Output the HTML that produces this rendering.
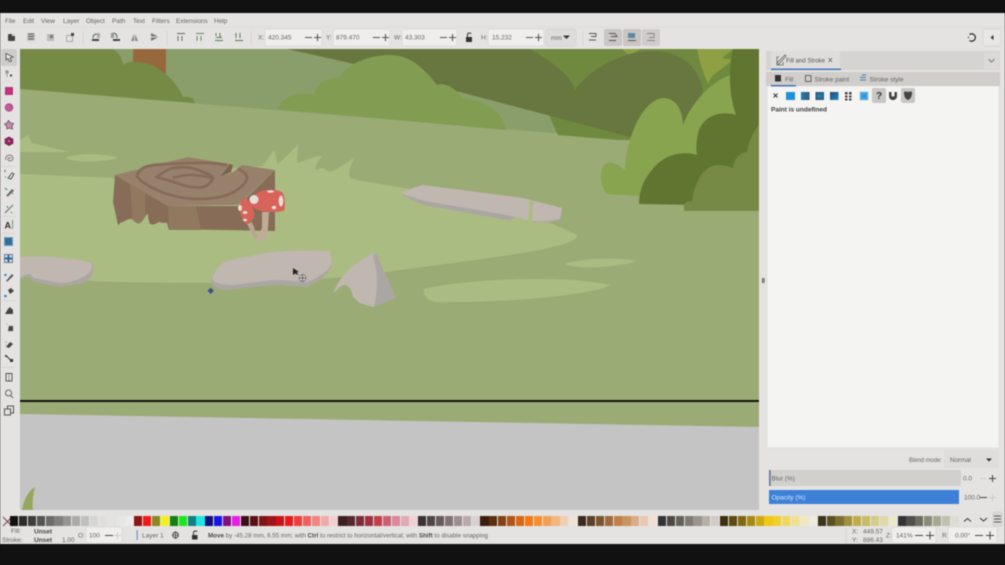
<!DOCTYPE html>
<html>
<head>
<meta charset="utf-8">
<style>
html,body{margin:0;padding:0;background:#111;width:1005px;height:565px;overflow:hidden}
#w{position:absolute;left:0;top:0;width:1005px;height:565px;filter:blur(.5px)}
svg{position:absolute;left:0;top:0}
text{font-family:"Liberation Sans",sans-serif;font-size:6.5px;fill:#666}
.b{font-weight:bold;fill:#4a4a4a}
.pal{position:absolute;left:10px;top:516px;height:10px;display:flex}
.pal i{display:block;width:8.2px;margin-right:.7px;height:10px;flex:none}
.d{fill:#444}
</style>
</head>
<body>
<div id="w">
<svg width="1005" height="565" viewBox="0 0 1005 565">
<rect width="1005" height="565" fill="#111"/>
<rect y="13" width="1005" height="531" fill="#e4e3e1"/>
<line x1="0" y1="27" x2="1005" y2="27" stroke="#dedcda"/>
<!-- CANVAS -->
<svg x="20" y="49" width="739" height="461" viewBox="20 49 739 461">
<rect x="20" y="49" width="739" height="461" fill="#9bab75"/>
<path d="M20 49H759V150L20 89Z" fill="#8a9e6b"/>
<path d="M520 49H740V140H560Z" fill="#6f8a3e"/>
<path d="M287 49H530C552 62 570 74 575 90C590 68 625 50 657 51C682 53 698 66 703 90L690 137H630L460 92L350 63Z" fill="#68763f"/>
<path d="M697 49H733L722 58L733 60L712 76L708 84C703 72 699 60 697 49Z" fill="#8fa044"/>
<path d="M622 49H640C636 52 632 54 628 54Z" fill="#8fa044"/>
<rect x="133" y="49" width="33" height="30" fill="#96683c"/>
<path d="M20 49H112C119 52 122 58 123 65C128 61 133 62 137 62C155 62 175 78 183 97C190 96 194 98 195 103L20 89Z" fill="#758a45"/>
<path d="M277 109C283 99 290 94 302 94C308 93 312 94 314 95C315 84 326 78 339 78C344 67 365 55 390 55C410 55 424 68 437 85C443 82 455 87 463 98C485 100 503 112 506 130Z" fill="#829c52"/>
<path d="M20 89L390 121L630 141L759 152V420L20 420Z" fill="#9bab75"/>
<path d="M607 194C600 186 599 172 604 165C610 159 620 166 625 170C625 145 640 100 663 98C677 98 683 112 683 125C690 105 710 82 730 75L759 60V196H640Z" fill="#88a44e"/>
<path d="M733 49C728 70 729 95 736 115C722 111 706 114 699 130C696 140 696 150 697 155C680 150 662 156 652 170C643 180 639 192 639 204L759 206V49Z" fill="#607530"/>
<path d="M684 211V205C687 200 691 202 692 201C695 180 705 165 718 165C725 165 731 167 733 168C734 158 741 152 747 152C749 142 752 133 759 125V211Z" fill="#768a45"/>
<path d="M20 174L115 178L262 166L355 180C420 190 530 208 578 236C570 248 520 254 400 270C360 276 340 278 300 280C250 283 160 284 90 281L20 262Z" fill="#abbc82"/>
<path d="M20 140L28 135L32 143L70 152L20 152Z" fill="#abbc82"/>
<path d="M65 158C75 153 105 153 118 158C105 162 75 163 65 158Z" fill="#abbc82"/>
<path d="M565 264C580 258 620 257 637 261C620 267 580 270 565 264Z" fill="#abbc82"/>
<path d="M424 289C460 280 560 274 610 285C590 296 500 303 435 302C425 300 423 293 424 289Z" fill="#abbc82"/>
<path d="M263 166C268 158 271 154 274 150C276 154 276 160 278 164C286 158 292 150 298 145C298 152 296 160 298 163C306 160 314 156 322 156C318 162 314 166 316 170L322 168L330 172C340 168 348 162 355 157C350 166 348 172 350 178L357 180L300 190Z" fill="#abbc82"/>
<!-- right rock -->
<path d="M402 195C408 190 415 187 423 185L523 198L562 208L560 220L547 223L507 220L423 205Z" fill="#aca6a3"/>
<path d="M402 194C408 189 415 187 423 185L523 198L562 208L560 219L547 221L530 221L507 215L425 201Z" fill="#bfb7b0"/>
<path d="M530 200L533 201L532 222L528 222Z" fill="#abbc82"/>
<path d="M508 222L515 217L527 220V225L508 225ZM532 222L545 222L552 226H532Z" fill="#abbc82"/>
<!-- left rock -->
<path d="M20 257C40 255 70 258 85 261C91 262 94 264 93 266L93 273C91 278 87 281 83 283L60 287L32 281L30 277C26 276 23 278 20 280Z" fill="#aca6a3"/>
<path d="M20 257C40 255 70 258 85 261C91 262 93 264 92 267L90 272C85 277 72 283 60 283L34 278L30 274C26 274 23 276 20 278Z" fill="#bfb7b0"/>
<!-- central rock -->
<path d="M211 280C214 272 218 266 223 263C230 259 240 258 247 257C260 254 268 252 273 252C290 250 315 250 330 251L332 263C331 268 328 273 323 277C317 282 312 285 307 287L277 285C260 286 240 289 223 290C217 289 212 286 211 280Z" fill="#aca6a3"/>
<path d="M212 279C214 272 218 266 223 263C230 259 240 258 247 257C260 254 268 252 273 252C290 250 315 250 330 251L332 262C331 266 328 270 325 272C318 277 313 280 307 282L277 280C260 281 245 284 233 285C222 285 214 283 212 279Z" fill="#bfb7b0"/>
<!-- tri rock -->
<path d="M333 293L337 285C345 270 360 260 373 253L376 253L396 298L373 307L360 303L353 297C352 290 349 286 345 285C340 285 337 291 333 293Z" fill="#bfb7b0"/>
<path d="M373 255L376 253L396 298L374 307C378 290 378 272 373 255Z" fill="#aca6a3"/>
<!-- stump -->
<path d="M115 175L168 206H238L275 170V231L167 229L118 225L113 202Z" fill="#876c58"/>
<path d="M130 184L145 192L146 227L133 226ZM168 206L196 206L201 230H169Z" fill="#91795f"/>
<path d="M115 175L188 157L230 164L220 177L233 172L242 165L275 170L238 205L168 206Z" fill="#98816c"/>
<path d="M227 165C210 162 200 163 188 163C170 164 150 164 143 168C139 171 137 174 137 177C143 183 150 187 157 190C170 196 185 199 200 199C215 199 228 196 237 190C243 186 247 182 247 177C246 173 243 171 238 169M157 177C163 172 168 169 173 168C185 166 195 168 203 172C209 174 213 176 213 178C210 184 207 186 203 187C195 189 185 186 177 183C170 181 163 179 157 177ZM173 178C180 176 185 175 190 175C198 175 205 176 213 178" fill="none" stroke="#866c58" stroke-width="2.800"/>
<path d="M220 177L230 164L233 165L231 172Z" fill="#7b634f"/>
<path d="M118 226L120 223C124 222 128 218 132 219C135 222 138 225 140 223C143 222 146 214 148 214C148 218 149 222 150 224C155 226 157 222 160 222C163 224 166 222 167 223L170 234H115Z" fill="#abbc82"/>
<!-- mushrooms -->
<path d="M247 224L252 222L258 238L254 238Z" fill="#b9a58f"/>
<path d="M262 212L269 212L268 228L266 241H256L262 228Z" fill="#c0ab97"/>
<path d="M243 199C247 195 251 204 254 212C256 218 250 223 246 224C240 217 237 205 243 199Z" fill="#d8635a"/>
<path d="M251 199C256 190 272 187 282 192C286 197 285 208 284 211C272 213 260 212 254 208C250 206 249 204 251 199Z" fill="#d8635a"/>
<ellipse cx="254" cy="199.500" rx="4.500" ry="4.500" fill="#e6dfd9"/>
<ellipse cx="281" cy="201" rx="2.300" ry="5.500" fill="#e6dfd9"/>
<ellipse cx="270.500" cy="191.500" rx="3.500" ry="1.300" fill="#e6dfd9"/>
<ellipse cx="274" cy="207.500" rx="2.300" ry="1.800" fill="#e6dfd9"/>
<ellipse cx="240" cy="208" rx="2" ry="3" fill="#e6dfd9"/>
<ellipse cx="245" cy="212.500" rx="2.500" ry="1.500" fill="#e6dfd9"/>
<ellipse cx="245" cy="220" rx="2" ry="1.300" fill="#e6dfd9"/>
<!-- cursor -->
<rect x="208.500" y="288.500" width="4.500" height="4.500" transform="rotate(45 210.700 290.700)" fill="#3c4f8e"/>
<path d="M293 268L293 275L295 273.500L298 275L297 272H299Z" fill="#222"/>
<circle cx="302.500" cy="278" r="3.400" fill="#d9d6d2" stroke="#666" stroke-width=".7"/>
<path d="M299.500 278H305.500M302.500 275V281" stroke="#444" stroke-width=".8"/>
<!-- line and lower -->
<path d="M20 414L759 427V510H20Z" fill="#c4c4c4"/>
<rect x="20" y="400" width="739" height="2" fill="#111"/>
<path d="M22 510C24 500 28 491 35 487C33 495 32 503 33 510Z" fill="#93a85d"/>
</svg>

<rect x="759" y="49" width="8" height="467" fill="#e4e3e1"/>
<rect x="0" y="510" width="760" height="6" fill="#e4e3e1"/>
<rect x="762" y="278" width="1" height="5" fill="#555"/><rect x="763.500" y="278" width="1" height="5" fill="#555"/>

<!-- MENU -->
<text x="5" y="23">File</text><text x="23" y="23">Edit</text><text x="41" y="23">View</text><text x="63" y="23">Layer</text><text x="86" y="23">Object</text><text x="112" y="23">Path</text><text x="133" y="23">Text</text><text x="152" y="23">Filters</text><text x="176" y="23">Extensions</text><text x="214" y="23">Help</text>

<!-- TOP TOOLBAR ICONS -->
<rect x="8" y="34" width="7" height="7" class="d" rx="1"/><rect x="12" y="33" width="3" height="3" fill="#d8d8d8"/>
<rect x="27" y="33" width="8" height="8" fill="#999" opacity=".35"/><path d="M28 34h6M28 36.500h6M28 39h6" stroke="#666" stroke-width="1.200"/>
<rect x="47" y="34" width="7" height="7" fill="#bbb"/><rect x="50" y="35" width="3" height="3" fill="#777"/>
<rect x="66.500" y="35.500" width="6" height="6" fill="none" stroke="#aaa"/><rect x="71" y="33" width="3" height="3" fill="#444"/>
<rect x="92" y="39" width="7" height="2" fill="#444"/><path d="M93 38c0-3 2-4 4-4" fill="none" stroke="#3d6a42" stroke-width="1"/><rect x="97" y="33" width="3" height="5" fill="#aaa"/>
<path d="M113 33c3 0 4 2 4 5" fill="none" stroke="#3d6a42" stroke-width="1"/><rect x="111" y="33" width="3" height="5" fill="#999"/><rect x="113" y="39" width="7" height="2" fill="#444"/>
<path d="M131 41l3-7v7zM135 34l3 7h-3z" fill="#888"/>
<path d="M151 33l7 3.500h-7zM151 37.500h7l-7 3.500z" fill="#777"/>
<g stroke="#666" stroke-width="1" fill="none">
<path d="M177 33.500h8M178 36v5M182 36v5"/><path d="M196 33.500h8M197 36v5M201 36v5" stroke="#6b8a6b"/><path d="M215 40.500h8M216 33v3M220 33v5M216 37.500h6" stroke="#5a7a5a"/><path d="M235 40.500h8M236 33v5M240 33v5"  stroke="#5a7a5a"/>
</g>
<line x1="83" y1="31" x2="83" y2="45" stroke="#d6d4d2"/><line x1="167" y1="31" x2="167" y2="45" stroke="#d6d4d2"/><line x1="251" y1="31" x2="251" y2="45" stroke="#d6d4d2"/>

<!-- FIELDS -->
<g fill="#efeeec" stroke="#d8d6d4" stroke-width=".7">
<rect x="265" y="29" width="57" height="17" rx="2"/><rect x="333" y="29" width="57" height="17" rx="2"/><rect x="402" y="29" width="55" height="17" rx="2"/><rect x="488" y="29" width="56" height="17" rx="2"/>
</g>
<rect x="546" y="29" width="30" height="17" rx="2" fill="#dfddda" stroke="#d2d0ce" stroke-width=".7"/>
<text x="258" y="39.500">X:</text><text x="268" y="39.500">420.345</text>
<text x="326" y="39.500">Y:</text><text x="336" y="39.500">879.470</text>
<text x="394" y="39.500">W:</text><text x="405" y="39.500">43.303</text>
<text x="481" y="39.500">H:</text><text x="492" y="39.500">15.232</text>
<text x="551" y="40">mm</text>
<path d="M563 35.500h7l-3.500 3.500z" fill="#333"/>
<g stroke="#555" stroke-width="1.100">
<path d="M305 37.500h7M314 37.500h7M317.500 34v7M373 37.500h7M382 37.500h7M385.500 34v7M440 37.500h7M449 37.500h7M452.500 34v7M526 37.500h7M535 37.500h7M538.500 34v7"/>
</g>
<path d="M466 37h6v5h-6z" fill="#333"/><path d="M467.500 37v-2c0-2.500 3-2.500 3.500-1" fill="none" stroke="#333" stroke-width="1"/>

<line x1="583" y1="31" x2="583" y2="45" stroke="#d6d4d2"/>
<rect x="604" y="29" width="18" height="17" rx="2" fill="#c9c6c4"/><rect x="623" y="29" width="18" height="17" rx="2" fill="#c9c6c4"/><rect x="642" y="29" width="18" height="17" rx="2" fill="#cfccca"/>
<g fill="none" stroke="#555" stroke-width=".9">
<path d="M589 33.500h7v3h-5M589 40h7"/><path d="M609 33.500h6l2 3h-6M609 40.500h7"/><path d="M647 33.500h7v4h-5M647 40.500h8" stroke="#888"/>
</g>
<rect x="628" y="33" width="7" height="5" fill="#5a8aa8"/><path d="M628 40.500h8" stroke="#555"/>
<path d="M969.500 34.500a3.700 3.700 0 1 1 0 6" fill="none" stroke="#333" stroke-width="1.300"/><circle cx="968.500" cy="37.500" r="1" fill="#888"/>
<rect x="983" y="29" width="18" height="17" rx="2" fill="#e8e7e5" stroke="#d2d0ce" stroke-width=".7"/>
<path d="M993.500 35v5l-3-2.500z" fill="#333"/>

<!-- LEFT TOOLBAR -->
<rect x="1" y="49" width="16" height="17" rx="2" fill="#cecccb"/>
<path d="M6 53.500l7 3.500-3 1 1.500 3-2 .5-1.500-3-2 1.500z" fill="#e8e8e8" stroke="#555" stroke-width=".9"/>
<rect x="6" y="71" width="2" height="2" fill="none" stroke="#555" stroke-width=".7"/><path d="M7 74v3" stroke="#777" stroke-width=".7"/><rect x="10" y="74.500" width="2" height="2" fill="#444"/>
<rect x="5.500" y="87.500" width="7" height="7" fill="#d02f80" stroke="#8a2058" stroke-width=".7"/>
<circle cx="9" cy="107.500" r="3.800" fill="#c65b9b" stroke="#903068" stroke-width=".7"/>
<path d="M8.500 120.500l2 2.500 3 .5-1.500 2.500 .5 3-3-1-2.500 1-.5-3-2-2 2.500-1z" fill="#c98ab0" stroke="#6a4a60" stroke-width=".8"/>
<path d="M9 137l4 2v4.500l-4 2-4-2V139z" fill="#90265e" stroke="#601a40" stroke-width=".6"/><circle cx="9" cy="141" r="1" fill="#d8b"/>
<path d="M6 160c-2-5 6-7 7-2 0 3-4 4-5 1.500 0-2 2-2 3-1" fill="none" stroke="#777" stroke-width="1"/>
<path d="M5 170v2M5 177h1" stroke="#3a7a3a" stroke-width="1"/><path d="M8 178l4-5 2 1-3 5z" fill="none" stroke="#555" stroke-width="1"/>
<path d="M6 196l6-7 2 1.500-6 6z" fill="#666"/><path d="M5 188l2 2M12 193l1 1" stroke="#3a8a3a" stroke-width="1"/>
<path d="M5 213l8-8" stroke="#666" stroke-width="1"/><path d="M7 206l1 2M11 212l1 1" stroke="#3a8a3a" stroke-width="1"/>
<text x="4.500" y="228.500" style="font-size:9px;font-weight:bold;fill:#333">A</text><path d="M12.500 220v9" stroke="#3a7a3a" stroke-width=".7"/>
<rect x="4.500" y="237.500" width="8" height="8" fill="#2c6f9c" stroke="#7a9ab0"/>
<rect x="4.500" y="254.500" width="8" height="8" fill="#cfe0ea" stroke="#778"/><path d="M8.500 255v7M5 258.500h7" stroke="#2a6a9a" stroke-width="2"/>
<path d="M6 281l6-7 1.500 1.500-6 6z" fill="#555"/><circle cx="5.500" cy="275" r="1.200" fill="#2a88cc"/>
<path d="M8 290l3-2 3 3-4 3z" fill="#444"/><circle cx="5.500" cy="296" r="1.300" fill="#2a88cc"/>
<path d="M5 314l3-5 2-2 3 3v4z" fill="#444"/>
<path d="M6 323l2 2M9 326h4v5H8z" fill="#444" stroke="#888" stroke-width=".5"/>
<path d="M6 347l4-5 3 2-4 4z" fill="#444"/><path d="M5 342h2M5 345h1" stroke="#aaa"/>
<path d="M5.500 355l6 6" stroke="#333" stroke-width="1"/><circle cx="6" cy="356" r="1" fill="#333"/><rect x="10" y="359" width="3" height="3" fill="#333"/>
<rect x="6" y="373.500" width="6" height="7.500" fill="none" stroke="#555"/><path d="M9 373.500v7.500" stroke="#555" stroke-dasharray="1 1"/>
<circle cx="8.500" cy="393" r="3" fill="none" stroke="#666" stroke-width="1"/><path d="M10.700 395.500l2.500 2.500" stroke="#666"/>
<rect x="7.500" y="406" width="6" height="7" fill="none" stroke="#555"/><rect x="4.500" y="409" width="6" height="6" fill="#e4e3e1" stroke="#555"/>
<g stroke="#d8d6d4"><path d="M2 166.500h14M2 216.500h14M2 233.500h14M2 300.500h14M2 367.500h14"/></g>

<!-- RIGHT PANEL -->
<rect x="766" y="51" width="234" height="19" fill="#d6d4d1"/>
<rect x="771" y="51" width="69" height="18" fill="#dfddda"/>
<rect x="771" y="68.500" width="70" height="1.500" fill="#3f74b8"/>
<path d="M777 63l1.500 1.500L786 56l-1-1zM779 57h-2v8h6v-3" fill="none" stroke="#666" stroke-width=".8"/>
<text x="786" y="62.500" textLength="39" lengthAdjust="spacingAndGlyphs" style="fill:#555">Fill and Stroke</text>
<path d="M828.500 58l3.500 4M832 58l-3.500 4" stroke="#666" stroke-width=".8"/>
<rect x="984" y="52" width="15" height="17" fill="#dcdad7"/>
<path d="M988.500 59l3 3 3-3" fill="none" stroke="#777" stroke-width="1"/>
<rect x="766" y="72" width="234" height="14" fill="#d0cdca"/>
<rect x="767" y="86" width="232" height="362" fill="#f4f4f3" stroke="#dbd9d7" stroke-width=".7"/>
<rect x="775" y="75" width="6" height="6.500" fill="#333"/>
<text x="785" y="81.500">Fill</text>
<rect x="771" y="85" width="25" height="1.500" fill="#3f74b8"/>
<rect x="805.500" y="75.500" width="5.500" height="6" fill="none" stroke="#666"/>
<text x="814.500" y="81.500">Stroke paint</text>
<path d="M860 80h6M860 77.500h6M862 75h4" stroke="#3a80b8" stroke-width="1"/>
<text x="869.500" y="81.500">Stroke style</text>
<path d="M773.500 93.500l4 4M777.500 93.500l-4 4" stroke="#333" stroke-width="1"/>
<defs><linearGradient id="g1"><stop offset="0" stop-color="#1f7ab8"/><stop offset="1" stop-color="#3d5a6d"/></linearGradient><radialGradient id="g2"><stop offset="0" stop-color="#1d8ccc"/><stop offset="1" stop-color="#2f5a75"/></radialGradient><linearGradient id="g3" x2="1" y2="1"><stop offset="0" stop-color="#24496b"/><stop offset="1" stop-color="#1f8ccc"/></linearGradient></defs>
<rect x="786" y="92" width="9" height="8" fill="#1f90d8"/>
<rect x="801" y="92" width="8.500" height="8" fill="url(#g1)"/>
<rect x="815.500" y="92" width="8.500" height="8" fill="url(#g2)"/>
<rect x="830" y="92" width="8.500" height="8" fill="url(#g3)"/>
<g fill="#444"><rect x="845" y="92" width="2.500" height="2.500"/><rect x="849" y="92" width="2.500" height="2.500"/><rect x="845" y="95.500" width="2.500" height="2"/><rect x="849" y="95.500" width="2.500" height="2"/><rect x="845" y="98.500" width="2.500" height="2"/><rect x="849" y="98.500" width="2.500" height="2"/></g>
<rect x="860.500" y="92.500" width="7" height="7" fill="#2d9ae0" stroke="#6ab0dc" stroke-width="1.500"/>
<rect x="872" y="88" width="14" height="15" rx="2" fill="#c9c6c4"/>
<text x="876" y="99" style="font-size:10px;font-weight:bold;fill:#333">?</text>
<path d="M889 92h2.500v3.500c0 1.500 3 1.500 3 0V92h2.500v4c0 5.500-8 5.500-8 0z" fill="#444"/>
<rect x="901" y="88" width="14" height="15" rx="2" fill="#c9c6c4"/>
<path d="M904 92c2-1 2.500 0 4 0s2-1 4 0c0 4-1 7-4 8-3-1-4-4-4-8z" fill="#444"/>
<text x="771" y="111.500" class="b" style="fill:#3c3c3c">Paint is undefined</text>

<text x="909" y="462" textLength="33" lengthAdjust="spacingAndGlyphs">Blend mode:</text>
<rect x="944" y="450" width="55" height="18" rx="2" fill="#dfddda"/>
<text x="950" y="462">Normal</text>
<path d="M986 458.500h6l-3 3z" fill="#333"/>
<rect x="769" y="470" width="192" height="16" fill="#d2d0cd"/><rect x="769" y="470" width="1.700" height="16" fill="#6a7a9c"/>
<text x="771.500" y="480.500">Blur (%)</text>
<text x="963" y="480.500">0.0</text>
<path d="M980 478.500h6" stroke="#ccc" stroke-width="1"/><path d="M989 478.500h7M992.500 475v7" stroke="#444" stroke-width="1"/>
<rect x="769" y="490" width="190" height="14" fill="#3c80d8"/>
<text x="771.500" y="499.500" style="fill:#d8e6f6">Opacity (%)</text>
<text x="964" y="499.500">100.0</text>
<path d="M980 497.500h7" stroke="#444" stroke-width="1"/><path d="M989 497.500h7M992.500 494v7" stroke="#ccc" stroke-width="1"/>
<path d="M964 521.500l3.500-3 3.500 3M980 518l3.500 3 3.500-3" fill="none" stroke="#333" stroke-width="1"/>
<rect x="993" y="512" width="9" height="14" rx="1.500" fill="#dbd9d7" stroke="#c8c6c4" stroke-width=".6"/>
<path d="M994 516h7M994 519h7M994 522h7" stroke="#555" stroke-width=".9"/>

<!-- STATUS -->
<path d="M3 517l9 9M12 517l-9 9" stroke="#7a3a4a" stroke-width=".9"/>
<text x="11" y="533">Fill:</text><text x="2" y="542">Stroke:</text>
<text x="34" y="533.500" class="b">Unset</text><text x="34" y="542" class="b">Unset</text>
<text x="62" y="542">1.00</text>
<text x="78" y="537.500">O:</text>
<rect x="86" y="527" width="36" height="16" rx="2" fill="#efeeec" stroke="#d8d6d4" stroke-width=".7"/>
<text x="89" y="537.500">100</text>
<path d="M105 535.500h8" stroke="#444" stroke-width="1"/><path d="M114 535.500h7M117.500 532v7" stroke="#ccc" stroke-width="1"/>
<rect x="136.500" y="530" width="1.300" height="10" fill="#7e96c4"/>
<text x="142" y="537.500">Layer 1</text>
<circle cx="175.500" cy="535" r="2.800" fill="none" stroke="#444" stroke-width="1"/><path d="M172 535h7M175.500 531v8" stroke="#444" stroke-width=".8"/>
<rect x="192" y="535" width="5.500" height="4.500" fill="#333"/><path d="M193.500 535v-2c0-2.500 3-2.500 3.500-1" fill="none" stroke="#333" stroke-width="1"/>
<text x="208" y="537.500" textLength="280" lengthAdjust="spacingAndGlyphs"><tspan class="b">Move</tspan> by -45.28 mm, 6.55 mm; with <tspan class="b">Ctrl</tspan> to restrict to horizontal/vertical; with <tspan class="b">Shift</tspan> to disable snapping</text>
<text x="852" y="533.500">X:</text><text x="863" y="533.500">449.57</text>
<text x="852" y="542">Y:</text><text x="863" y="542">886.43</text>
<line x1="846" y1="528" x2="846" y2="544" stroke="#d6d4d2"/>
<text x="886" y="537.500">Z:</text>
<rect x="892" y="527" width="44" height="16" rx="2" fill="#efeeec" stroke="#d8d6d4" stroke-width=".7"/>
<text x="896" y="537.500">141%</text>
<path d="M915 535.500h8M926 535.500h8M930 531.500v8" stroke="#444" stroke-width="1"/>
<text x="942" y="537.500">R:</text>
<rect x="948" y="527" width="49" height="16" rx="2" fill="#efeeec" stroke="#d8d6d4" stroke-width=".7"/>
<text x="955" y="537.500">0.00°</text>
<path d="M975 535.500h8M986 535.500h8M990 531.500v8" stroke="#444" stroke-width="1"/>
</svg>
<div class="pal">
<i style="background:#111"></i><i style="background:#2b2b2b"></i><i style="background:#3e3e3e"></i><i style="background:#555"></i><i style="background:#6b6b6b"></i><i style="background:#808080"></i><i style="background:#959595"></i><i style="background:#aaa"></i><i style="background:#bfbfbf"></i><i style="background:#d5d5d5"></i><i style="background:#dedede"></i><i style="background:#e2e2e2"></i><i style="background:#e6e6e6"></i><i style="background:#ebebeb"></i>
<i style="background:#8b1414"></i><i style="background:#f01a1a"></i><i style="background:#8a8a1c"></i><i style="background:#f5f01a"></i><i style="background:#148014"></i><i style="background:#1ee61e"></i><i style="background:#108080"></i><i style="background:#1ee6e6"></i><i style="background:#101080"></i><i style="background:#1515e6"></i><i style="background:#801080"></i><i style="background:#e61ee6"></i><i style="background:#3a1014"></i><i style="background:#5a1014"></i><i style="background:#801418"></i><i style="background:#a01418"></i><i style="background:#c81418"></i><i style="background:#e81a1e"></i><i style="background:#f03e3e"></i><i style="background:#f06060"></i><i style="background:#f08585"></i><i style="background:#f0aaaa"></i><i style="background:#f2cfcf"></i>
<i style="background:#3a2020"></i><i style="background:#552830"></i><i style="background:#7a2c38"></i><i style="background:#a03040"></i><i style="background:#c04048"></i><i style="background:#cc6070"></i><i style="background:#d88898"></i><i style="background:#e0aab5"></i><i style="background:#efd0d6"></i>
<i style="background:#383232"></i><i style="background:#4f4648"></i><i style="background:#665a5e"></i><i style="background:#827278"></i><i style="background:#9c8d90"></i><i style="background:#b8aaac"></i><i style="background:#d8d0d0"></i>
<i style="background:#3a1d0c"></i><i style="background:#5a2f10"></i><i style="background:#824214"></i><i style="background:#b05514"></i><i style="background:#d86814"></i><i style="background:#f47a14"></i><i style="background:#f49030"></i><i style="background:#f0a050"></i><i style="background:#f0b880"></i><i style="background:#f0cfb0"></i><i style="background:#efe3d8"></i>
<i style="background:#3c2a1e"></i><i style="background:#5c4028"></i><i style="background:#7c5530"></i><i style="background:#a06a3c"></i><i style="background:#c08048"></i><i style="background:#c89560"></i><i style="background:#d8ac85"></i><i style="background:#e8c8b0"></i><i style="background:#f0e0d4"></i>
<i style="background:#333"></i><i style="background:#4c4945"></i><i style="background:#65615a"></i><i style="background:#7f7a74"></i><i style="background:#9a948c"></i><i style="background:#b5afa6"></i><i style="background:#d0cbc4"></i>
<i style="background:#3c3010"></i><i style="background:#5c4a10"></i><i style="background:#806810"></i><i style="background:#a88810"></i><i style="background:#ccaa14"></i><i style="background:#f0c814"></i><i style="background:#f0d030"></i><i style="background:#f0d860"></i><i style="background:#f0e090"></i><i style="background:#f2e8c0"></i><i style="background:#efebda"></i>
<i style="background:#3a3418"></i><i style="background:#5a5020"></i><i style="background:#7c7030"></i><i style="background:#a09040"></i><i style="background:#c0ac48"></i><i style="background:#c8bc68"></i><i style="background:#d4cc88"></i><i style="background:#e0d8a8"></i><i style="background:#ece8cc"></i>
<i style="background:#333"></i><i style="background:#4f504a"></i><i style="background:#6c6e60"></i><i style="background:#8a8c78"></i><i style="background:#a6a890"></i><i style="background:#c0c0b0"></i><i style="background:#dcdcd4"></i>
</div>
</div>
</body>
</html>
